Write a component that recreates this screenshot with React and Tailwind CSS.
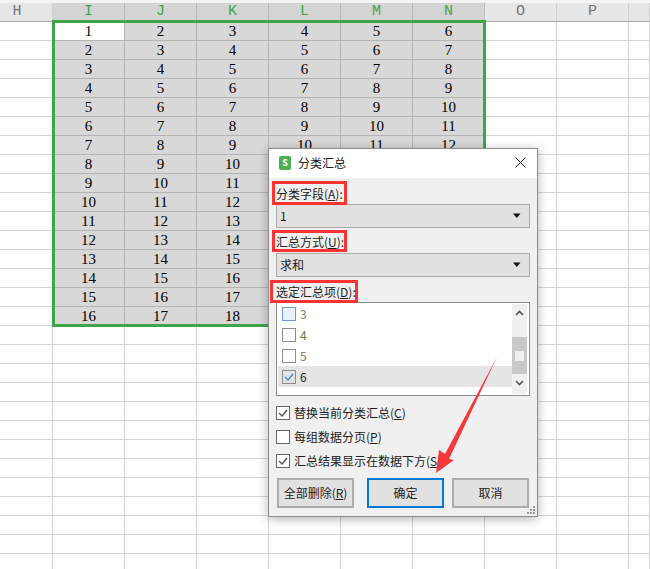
import React from 'react';

const cjk = '"Noto Sans CJK SC", "Liberation Sans", sans-serif';
const columns = ['H', 'I', 'J', 'K', 'L', 'M', 'N', 'O', 'P', ''];
const gridCols = 'grid grid-cols-[53px_repeat(8,72px)_21px]';

function HeaderCell({ label, selected, className = '' }) {
    return (
        <div
            className={`h-[18px] flex items-center justify-center border-r font-['Liberation_Mono',monospace] text-[15px] ${className} ${
                selected ? 'bg-[#d4d4d4] border-[#bcbcbc] text-[#3fa648]' : 'bg-[#e6e6e6] border-[#cfcfcf] text-[#777777]'
            }`}
        >
            {label}
        </div>
    );
}

function Cell({ value, selected, active }) {
    let tone = 'bg-white border-[#d4d4d4]';
    if (selected) tone = 'bg-[#d8d8d8] border-[#b4b4b4]';
    if (active) tone = 'bg-white border-[#b4b4b4]';
    return (
        <div className={`h-[19px] flex items-center justify-center border-r border-b font-['Liberation_Serif',serif] text-[15px] text-black ${tone}`}>
            {value}
        </div>
    );
}

function Sheet() {
    const rows = Array.from({ length: 29 }, (_, i) => i);
    return (
        <div>
            <div className="h-[3px] bg-[#f4f4f4]" />
            <div className={`${gridCols} border-b border-[#a8a8a8]`}>
                {columns.map((c, i) => (
                    <HeaderCell key={i} label={c} selected={i >= 1 && i <= 6} className={i === 0 ? 'pr-[18px]' : ''} />
                ))}
            </div>
            {rows.map((r) => (
                <div key={r} className={gridCols}>
                    {columns.map((_, c) => {
                        const selected = r < 16 && c >= 1 && c <= 6;
                        return (
                            <Cell
                                key={c}
                                value={selected ? r + c : ''}
                                selected={selected}
                                active={r === 0 && c === 1}
                            />
                        );
                    })}
                </div>
            ))}
        </div>
    );
}

function RedLabel({ width, height, margin, children }) {
    return (
        <div className={`relative z-10 flex items-center -ml-[4px] border-[3px] border-[#fb3333] pl-[1px] text-[12px] text-[#222222] whitespace-nowrap ${width} ${height} ${margin}`}>
            {children}
        </div>
    );
}

function Select({ value, margin }) {
    return (
        <div className={`h-[24px] flex items-center justify-between border border-[#ababab] bg-[#e1e1e1] pl-[3px] pr-[7px] text-[12px] text-[#222222] ${margin}`}>
            <span>{value}</span>
            <svg width="10" height="6" viewBox="0 0 10 6"><path d="M1 0.5h7.5L4.8 5z" fill="#111111" /></svg>
        </div>
    );
}

function TickBox({ checked, tint }) {
    return (
        <span className={`w-[14px] h-[14px] shrink-0 flex items-center justify-center border ${tint}`}>
            {checked && (
                <svg width="10" height="10" viewBox="0 0 10 10" fill="none">
                    <path d="M1 5l3 3 5-6" stroke={checked} strokeWidth="1.4" />
                </svg>
            )}
        </span>
    );
}

function ListRow({ label, box, checked, color, highlight }) {
    return (
        <div className={`h-[21px] flex items-center gap-[4px] pl-[4px] text-[12px] ${color} ${highlight ? 'bg-[#e5e5e5]' : ''}`}>
            <TickBox tint={box} checked={checked} />
            <span>{label}</span>
        </div>
    );
}

function OptionRow({ label, checked }) {
    return (
        <div className="h-[24px] flex items-center gap-[4px] text-[12px] text-[#222222] whitespace-nowrap">
            <TickBox tint="border-[#666666] bg-white" checked={checked ? '#555555' : null} />
            <span>{label}</span>
        </div>
    );
}

function Button({ children, className }) {
    return (
        <div className={`h-[30px] w-[77px] flex items-center justify-center bg-[#e1e1e1] text-[12px] text-[#222222] ${className}`}>
            {children}
        </div>
    );
}

function Dialog() {
    return (
        <div
            className="absolute left-[268px] top-[148px] w-[270px] h-[369px] border border-[#8c8c8c] bg-[#f0f0f0] shadow-[0_2px_10px_rgba(0,0,0,0.3)]"
            style={{ fontFamily: cjk }}
        >
            <div className="h-[29px] bg-white flex items-center pl-[10px] pr-[11px] pb-[2px]">
                <span className="w-[12px] h-[14px] rounded-[2px] bg-[#4caf50] flex items-center justify-center">
                    <span className="text-[9px] leading-none font-bold text-white">S</span>
                </span>
                <span className="ml-[7px] text-[12px] text-[#222222]">分类汇总</span>
                <svg className="ml-auto" width="11" height="11" viewBox="0 0 11 11" fill="none">
                    <path d="M0.5 0.5l10 10M10.5 0.5l-10 10" stroke="#222222" strokeWidth="1" />
                </svg>
            </div>
            <div className="px-[7px] pt-[3px]">
                <RedLabel width="w-[75px]" height="h-[24px] pt-[1px]" margin="">分类字段(<u>A</u>):</RedLabel>
                <Select value="1" margin="-mt-[1px]" />
                <RedLabel width="w-[75px]" height="h-[22px] pt-[1px]" margin="mt-[2px]">汇总方式(<u>U</u>):</RedLabel>
                <Select value="求和" margin="mt-[1px]" />
                <RedLabel width="w-[88px]" height="h-[23px]" margin="mt-[3px] -ml-[6px] pl-[3px]">选定汇总项(<u>D</u>):</RedLabel>
                <div className="-mt-[1px] h-[94px] flex border border-[#8c8c8c] bg-white">
                    <div className="flex-1 pl-[1px]">
                        <ListRow label="3" box="border-[#6f96d8] bg-[#eaf1fb]" color="text-[#8a7a66]" />
                        <ListRow label="4" box="border-[#8c8c8c] bg-white" color="text-[#8a6a3c]" />
                        <ListRow label="5" box="border-[#8c8c8c] bg-white" color="text-[#8a7a66]" />
                        <ListRow label="6" box="border-[#8c8c8c] bg-[#e5e5e5]" checked="#4f7fd0" color="text-[#222222]" highlight />
                    </div>
                    <div className="w-[15px] mr-[2px] my-px flex flex-col items-center bg-[#f0f0f0]">
                        <svg className="mt-[6px]" width="9" height="6" viewBox="0 0 9 6" fill="none"><path d="M1 5l3.5-3.5L8 5" stroke="#555555" strokeWidth="1.6" /></svg>
                        <div className="mt-[21px] w-full h-[37px] bg-[#c8c8c8] flex items-center justify-center">
                            <span className="w-[9px] h-[10px] bg-[#f0f0f0]" />
                        </div>
                        <svg className="mt-[6px]" width="9" height="6" viewBox="0 0 9 6" fill="none"><path d="M1 1l3.5 3.5L8 1" stroke="#555555" strokeWidth="1.6" /></svg>
                    </div>
                </div>
                <div className="mt-[5px]">
                    <OptionRow checked label={<>替换当前分类汇总(<u>C</u>)</>} />
                    <OptionRow label={<>每组数据分页(<u>P</u>)</>} />
                    <OptionRow checked label={<>汇总结果显示在数据下方(<u>S</u>)</>} />
                </div>
                <div className="mt-[5px] ml-px flex">
                    <Button className="border-2 border-[#adadad]">全部删除(<u>R</u>)</Button>
                    <Button className="ml-[13px] border-2 border-[#0078d7]">确定</Button>
                    <Button className="ml-[8px] border-2 border-[#adadad]">取消</Button>
                </div>
            </div>
            <svg className="absolute right-[1px] bottom-[1px]" width="10" height="10" viewBox="0 0 10 10" fill="#9a9a9a">
                <rect x="7" y="1" width="2" height="2" /><rect x="4" y="4" width="2" height="2" /><rect x="7" y="4" width="2" height="2" />
                <rect x="1" y="7" width="2" height="2" /><rect x="4" y="7" width="2" height="2" /><rect x="7" y="7" width="2" height="2" />
            </svg>
        </div>
    );
}

export default function App() {
    return (
        <div className="relative w-[650px] h-[569px] overflow-hidden bg-white">
            <Sheet />
            {/* selection outline */}
            <div className="absolute left-[52px] top-[20px] w-[434px] h-[307px] border-[3px] border-[#3fa648]" />
            <Dialog />
            {/* red arrow */}
            <svg className="absolute left-0 top-0" width="650" height="569" viewBox="0 0 650 569">
                <path d="M497 357L449 459L454 460L436 473L439 450L445 454Z" fill="#f5383a" />
            </svg>
        </div>
    );
}
